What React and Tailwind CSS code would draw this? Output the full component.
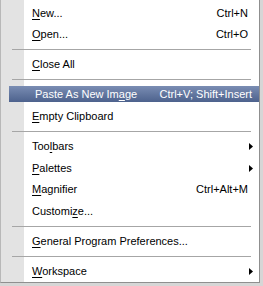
import React from "react";

const items = [
  { label: "New...", u: 0, key: "Ctrl+N" },
  { label: "Open...", u: 0, key: "Ctrl+O" },
  { sep: true },
  { label: "Close All", u: 0 },
  { sep: true },
  { label: "Paste As New Image", u: 15, key: "Ctrl+V; Shift+Insert", active: true },
  { label: "Empty Clipboard", u: 0 },
  { sep: true },
  { label: "Toolbars", u: 3, sub: true },
  { label: "Palettes", u: 0, sub: true },
  { label: "Magnifier", u: 0, key: "Ctrl+Alt+M" },
  { label: "Customize...", u: 7 },
  { sep: true },
  { label: "General Program Preferences...", u: 0 },
  { sep: true },
  { label: "Workspace", u: 0, sub: true },
];

function Label({ text, u }) {
  return (
    <span>
      {text.slice(0, u)}
      <span className="underline underline-offset-2">{text[u]}</span>
      {text.slice(u + 1)}
    </span>
  );
}

function Arrow() {
  return (
    <svg width="4" height="7" viewBox="0 0 4 7" className="absolute right-[6px] top-[8px]">
      <path d="M0 0 L4 3.5 L0 7 Z" fill="#000" />
    </svg>
  );
}

export default function App() {
  return (
    <div
      className="w-[263px] h-[286px] bg-[#d6d6d6] overflow-hidden"
      style={{ fontFamily: "'Liberation Sans', Arial, sans-serif" }}
    >
      <div className="w-[260px] h-[283px] flex bg-white border-l border-l-[#b8b8b8] border-r border-r-[#8f8f8f] border-b border-b-[#8f8f8f]">
        <div className="w-[23px] shrink-0 bg-[#e3e3e3]" />
        <div className="flex-1 flex flex-col pt-[2px] relative whitespace-nowrap">
          {items.map((it, i) =>
            it.sep ? (
              <div key={i} className="h-[8px] flex items-center">
                <div className="ml-[-12px] w-[239px] h-px bg-[#a6a6a6]" />
              </div>
            ) : it.active ? (
              <div key={i} className="relative h-[22px] flex items-center ml-[-15px] py-[3px]">
                <div className="w-full h-[16px] flex items-center bg-gradient-to-b from-[#7a8db3] to-[#4d628d] text-white text-[11px] pl-[26px] pr-[7px]">
                  <Label text={it.label} u={it.u} />
                  <span className="ml-auto">{it.key}</span>
                </div>
              </div>
            ) : (
              <div
                key={i}
                className="relative h-[22px] flex items-center text-[11px] text-black pl-[8px] pr-[11px]"
              >
                <Label text={it.label} u={it.u} />
                {it.key && <span className="ml-auto">{it.key}</span>}
                {it.sub && <Arrow />}
              </div>
            )
          )}
        </div>
      </div>
    </div>
  );
}
